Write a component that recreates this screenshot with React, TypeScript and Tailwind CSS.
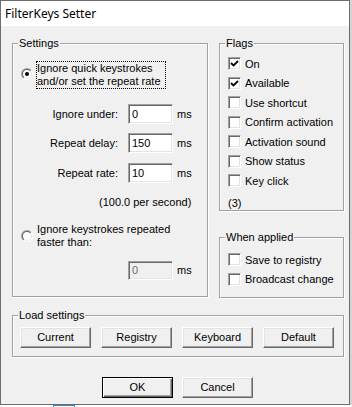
import { ReactNode } from "react";

const raised =
  "border border-t-white border-l-white border-r-[#696969] border-b-[#696969] shadow-[inset_-1px_-1px_0_#a0a0a0,inset_1px_1px_0_#e3e3e3]";
const sunken =
  "border border-t-[#a0a0a0] border-l-[#a0a0a0] border-r-white border-b-white shadow-[inset_1px_1px_0_#696969,inset_-1px_-1px_0_#e3e3e3]";

function GroupBox({ title, className, children }: { title: string; className: string; children: ReactNode }) {
  return (
    <div className={`relative border border-[#a0a0a0] shadow-[inset_1px_1px_0_#fff,1px_1px_0_#fff] ${className}`}>
      <div className="absolute left-[5px] -top-[7px] bg-[#f0f0f0] px-[1px] leading-[13px]">{title}</div>
      {children}
    </div>
  );
}

function Radio({ checked }: { checked?: boolean }) {
  return (
    <svg width="12" height="12" viewBox="0 0 12 12" className="shrink-0">
      <defs>
        <linearGradient id="rOuter" x1="0" y1="0" x2="1" y2="1">
          <stop offset="0.5" stopColor="#a0a0a0" />
          <stop offset="0.5" stopColor="#ffffff" />
        </linearGradient>
        <linearGradient id="rInner" x1="0" y1="0" x2="1" y2="1">
          <stop offset="0.5" stopColor="#696969" />
          <stop offset="0.5" stopColor="#e3e3e3" />
        </linearGradient>
      </defs>
      <circle cx="6" cy="6" r="6" fill="url(#rOuter)" />
      <circle cx="6" cy="6" r="5" fill="url(#rInner)" />
      <circle cx="6" cy="6" r="4" fill="#ffffff" />
      {checked && <circle cx="6" cy="6" r="2" fill="#000000" />}
    </svg>
  );
}

function Check({ label, checked }: { label: string; checked?: boolean }) {
  return (
    <div className="flex items-center h-[19.5px]">
      <div className={`ml-[8px] w-[13px] h-[13px] bg-white shrink-0 flex items-center justify-center ${sunken}`}>
        {checked && (
          <svg width="9" height="9" viewBox="0 0 9 9">
            <path d="M1 4 L3.5 6.5 L8 2" fill="none" stroke="#000" strokeWidth="1.8" />
          </svg>
        )}
      </div>
      <span className="ml-[4px] whitespace-nowrap">{label}</span>
    </div>
  );
}

function MsField({ label, value, className }: { label: string; value: string; className: string }) {
  return (
    <div className={`flex items-center h-[20px] ${className}`}>
      <div className="w-[105px] text-right">{label}</div>
      <div className={`ml-[10px] w-[45px] h-[20px] bg-white pl-[3px] flex items-center ${sunken}`}>{value}</div>
      <span className="ml-[4px]">ms</span>
    </div>
  );
}

function Btn({ label, isDefault }: { label: string; isDefault?: boolean }) {
  return (
    <div
      className={`w-[71px] h-[21px] flex items-center justify-center bg-[#f0f0f0] ${
        isDefault
          ? "border border-black shadow-[inset_1px_1px_0_#fff,inset_-1px_-1px_0_#696969,inset_-2px_-2px_0_#a0a0a0]"
          : raised
      }`}
    >
      {label}
    </div>
  );
}

export default function App() {
  return (
    <div className="w-[352px] h-[407px] bg-white flex flex-col font-['Liberation_Sans',Arial,sans-serif] text-[11px] text-black">
      <div className="flex">
        <div className="w-[350px] h-[405px] border border-[#6e6e6e] bg-[#f0f0f0] flex flex-col">
          <div className="h-[25px] bg-white flex items-center pl-[4px] font-['Noto_Sans',sans-serif] text-[12px]">
            FilterKeys Setter
          </div>

          <div className="flex flex-col pl-[11px]">
            <div className="flex mt-[17px]">
              <GroupBox title="Settings" className="w-[196px] h-[254px]">
                <div className="flex flex-col">
                  <div className="flex items-start mt-[17px]">
                    <div className="ml-[8px] mt-[7px]">
                      <Radio checked />
                    </div>
                    <div className="ml-[3px] w-[130px] border border-dotted border-black leading-[13px] whitespace-nowrap">
                      Ignore quick keystrokes
                      <br />
                      and/or set the repeat rate
                    </div>
                  </div>
                  <MsField label="Ignore under:" value="0" className="mt-[15px]" />
                  <MsField label="Repeat delay:" value="150" className="mt-[9px]" />
                  <MsField label="Repeat rate:" value="10" className="mt-[10px]" />
                  <div className="mt-[13px] pl-[86px] leading-[13px]">(100.0 per second)</div>
                  <div className="flex items-start mt-[14px]">
                    <div className="ml-[8px] mt-[7px]">
                      <Radio />
                    </div>
                    <div className="ml-[4px] leading-[13px] whitespace-nowrap">
                      Ignore keystrokes repeated
                      <br />
                      faster than:
                    </div>
                  </div>
                  <div className="flex items-center mt-[12px] h-[19px]">
                    <div
                      className={`ml-[115px] w-[45px] h-[19px] bg-[#f0f0f0] text-[#6d6d6d] pl-[3px] flex items-center ${sunken}`}
                    >
                      0
                    </div>
                    <span className="ml-[4px]">ms</span>
                  </div>
                </div>
              </GroupBox>

              <div className="flex flex-col ml-[11px]">
                <GroupBox title="Flags" className="w-[125px] h-[168px]">
                  <div className="flex flex-col mt-[10px]">
                    <Check label="On" checked />
                    <Check label="Available" checked />
                    <Check label="Use shortcut" />
                    <Check label="Confirm activation" />
                    <Check label="Activation sound" />
                    <Check label="Show status" />
                    <Check label="Key click" />
                    <div className="mt-[6px] ml-[8px] leading-[13px]">(3)</div>
                  </div>
                </GroupBox>
                <GroupBox title="When applied" className="w-[125px] h-[61px] mt-[26px]">
                  <div className="flex flex-col mt-[12px]">
                    <Check label="Save to registry" />
                    <Check label="Broadcast change" />
                  </div>
                </GroupBox>
              </div>
            </div>

            <GroupBox title="Load settings" className="w-[332px] h-[42px] mt-[17px]">
              <div className="flex gap-[10px] ml-[7px] mt-[11px]">
                <Btn label="Current" />
                <Btn label="Registry" />
                <Btn label="Keyboard" />
                <Btn label="Default" />
              </div>
            </GroupBox>

            <div className="flex gap-[9px] ml-[90px] mt-[20px]">
              <Btn label="OK" isDefault />
              <Btn label="Cancel" />
            </div>
          </div>
        </div>
        <div className="w-[2px] h-[405px] bg-[#d4d4d4]" />
      </div>
      <div className="ml-[53px] w-[22px] h-[2px] border-t border-x border-[#3c7fb1]" />
    </div>
  );
}
